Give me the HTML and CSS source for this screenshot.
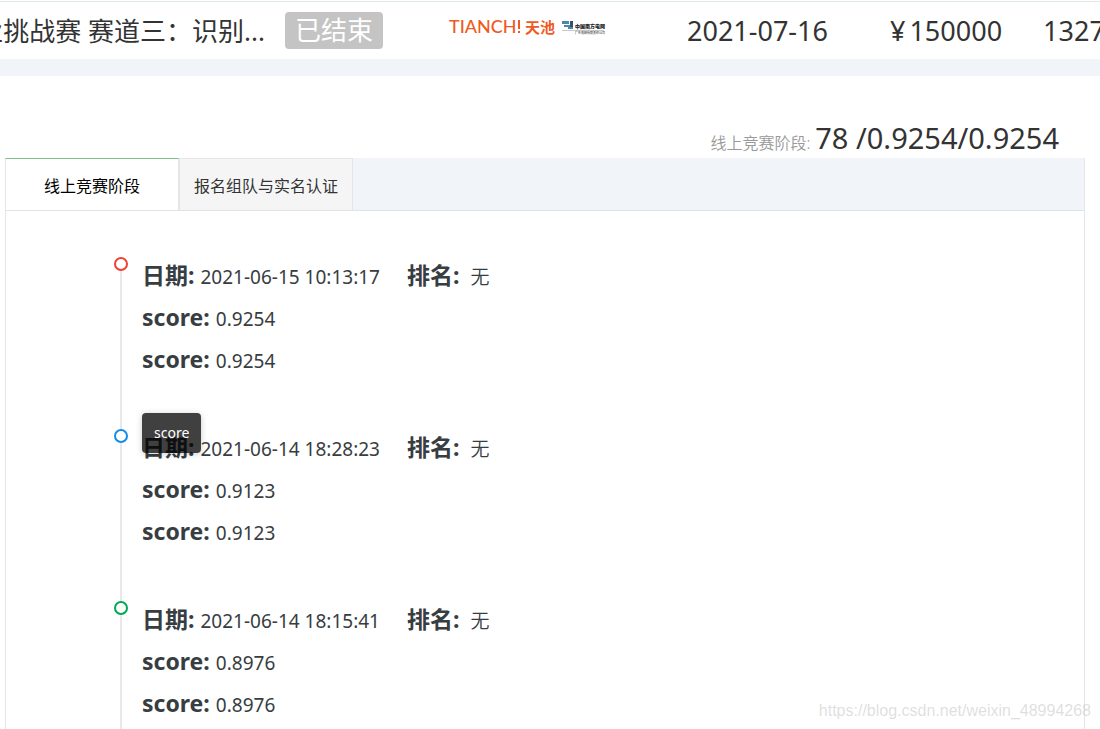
FILE: index.html
```html
<!DOCTYPE html>
<html lang="zh-CN">
<head>
<meta charset="utf-8">
<title>线上竞赛阶段</title>
<link rel="stylesheet" href="styles.css">
</head>
<body>
<header class="race">
  <div class="race-title"><h1>业挑战赛 赛道三：识别...</h1></div>
  <span class="badge">已结束</span>
  <svg class="sponsors" width="160" height="20" viewBox="0 0 160 20" role="img" aria-label="TIANCHI 天池 中国南方电网">
    <g fill="#f05a22">
      <text class="logo-latin" x="1" y="16">TIANCH</text>
      <path d="M70 3h2v9h-2zM70 14h2v2h-2z"/>
      <text class="logo-cjk" x="77" y="16">天池</text>
    </g>
    <path fill="#4b87a8" d="M114 4h7v3h-7zM116 8h6v2h-6zM120 10h5v2h-5z"/>
    <path fill="#2d566e" d="M122 4h3v6h-3z"/>
    <text class="grid-name" x="127" y="11">中国南方电网</text>
    <path fill="#c8c8c8" d="M114 13h42v1h-42z"/>
    <text class="grid-sub" x="127" y="17">广东电网有限责任公司</text>
  </svg>
  <span class="date">2021-07-16</span>
  <span class="prize"><span>¥</span><span>150000</span></span>
  <span class="teams">1327</span>
</header>
<main class="content">
  <p class="summary"><span class="summary-label">线上竞赛阶段:</span> <span class="summary-value">78 /0.9254/0.9254</span></p>
  <section class="card">
    <nav class="tabs" role="tablist">
      <button class="tab active" role="tab" aria-selected="true">线上竞赛阶段</button>
      <button class="tab" role="tab" aria-selected="false">报名组队与实名认证</button>
    </nav>
    <ol class="timeline">
      <li class="entry red">
        <p><b>日期:</b><span>2021-06-15 10:13:17</span><b class="rank">排名:</b><span class="none">无</span></p>
        <p><b>score:</b><span>0.9254</span></p>
        <p><b>score:</b><span>0.9254</span></p>
      </li>
      <li class="entry blue">
        <p><b>日期:</b><span>2021-06-14 18:28:23</span><b class="rank">排名:</b><span class="none">无</span></p>
        <p><b>score:</b><span>0.9123</span></p>
        <p><b>score:</b><span>0.9123</span></p>
        <div class="tooltip" role="tooltip">score</div>
      </li>
      <li class="entry green">
        <p><b>日期:</b><span>2021-06-14 18:15:41</span><b class="rank">排名:</b><span class="none">无</span></p>
        <p><b>score:</b><span>0.8976</span></p>
        <p><b>score:</b><span>0.8976</span></p>
      </li>
    </ol>
  </section>
</main>
<div class="watermark">https://blog.csdn.net/weixin_48994268</div>
</body>
</html>
```
FILE: styles.css
```css
*, *::before, *::after { box-sizing: border-box; }

body {
  margin: 0;
  height: 100vh;
  overflow: hidden;
  position: relative;
  background: #fff;
  color: #333;
  font-family: "Noto Sans", "Noto Sans CJK SC", sans-serif;
}

h1, p, ol { margin: 0; padding: 0; }

.race {
  display: flex;
  align-items: center;
  margin-top: 1px;
  border-top: 1px solid #dfe9e8;
  border-bottom: 17px solid #f1f5fa;
  height: 75px;
  overflow: hidden;
  white-space: nowrap;
  font-size: 27px;
  line-height: 38px;
}

.race-title {
  display: flex;
  justify-content: flex-end;
  flex: none;
  width: 265px;
}

.race-title h1 {
  font-size: 26px;
  font-weight: 400;
}

.badge {
  flex: none;
  margin-left: 20px;
  padding: 0 10px;
  border-radius: 4px;
  background: #c4c4c4;
  color: #fff;
  font-size: 26px;
  line-height: 37px;
}

.sponsors { flex: none; margin: 0 79px 8px 65px; }
.logo-latin { font: 500 18px Lato, sans-serif; }
.logo-cjk { font: 700 15px "Noto Sans CJK SC", sans-serif; }
.grid-name { font: 900 5px "Noto Sans CJK SC", sans-serif; fill: #222; }
.grid-sub { font: 500 3px "Noto Sans CJK SC", sans-serif; fill: #444; }

.prize { display: flex; gap: 4px; margin-left: 62px; }
.teams { margin-left: 41px; }

.content { padding: 42px 15px 0 5px; }

.summary {
  display: flex;
  align-items: baseline;
  justify-content: flex-end;
  gap: 5px;
  height: 40px;
  padding-right: 26px;
  line-height: 39px;
}

.summary-label { color: #999; font-size: 16px; font-weight: 350; }
.summary-value { font-size: 29px; }

.card { border: 1px solid #e4e7ea; border-top: 0; }

.tabs {
  display: flex;
  height: 53px;
  margin-left: -1px;
  background: #f1f5fa;
  border-bottom: 1px solid #dfe4ea;
}

.tab {
  min-width: 174px;
  padding: 0 12px;
  border: 1px solid #e4e6e8;
  border-bottom: 0;
  background: #f5f5f5;
  color: #333;
  font: 16px "Noto Sans", "Noto Sans CJK SC", sans-serif;
}

.tab.active { border-top-color: #7cc08c; background: #fff; color: #000; }

.timeline { padding: 43px 0 0 115px; list-style: none; }

.entry {
  position: relative;
  height: 172px;
  padding-left: 21px;
  color: #373d41;
  font-size: 19px;
}

.entry::before {
  content: "";
  position: absolute;
  left: -1px;
  top: 10px;
  width: 2px;
  height: 172px;
  background: #e8e8e8;
}

.entry::after {
  content: "";
  position: absolute;
  left: -7px;
  top: 3px;
  width: 14px;
  height: 14px;
  border: 2px solid;
  border-radius: 50%;
  background: #fff;
}

.red::after { border-color: #f04134; }
.blue::after { border-color: #108ee9; }
.green::after { border-color: #00a854; }

.entry p {
  display: flex;
  align-items: baseline;
  gap: 6px;
  height: 42px;
  line-height: 42px;
}

.entry b { font-size: 23px; }
.entry .rank { margin-left: 21px; }
.entry .none { margin-left: 5px; font-weight: 350; }

.tooltip {
  position: absolute;
  left: 21px;
  top: -13px;
  padding: 10px 12px;
  border-radius: 4px;
  background: rgba(0, 0, 0, .75);
  box-shadow: 0 1px 6px rgba(0, 0, 0, .2);
  color: #fff;
  font-size: 14px;
  line-height: 20px;
}

.watermark {
  position: absolute;
  right: 9px;
  bottom: 9px;
  color: rgba(160, 160, 160, .35);
  font: 16px "Liberation Sans", sans-serif;
}
```
